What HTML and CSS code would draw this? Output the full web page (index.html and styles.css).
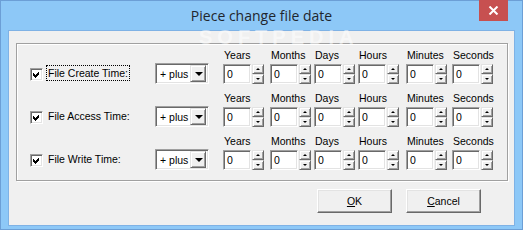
FILE: index.html
```html
<!DOCTYPE html>
<html>
<head>
<meta charset="utf-8">
<link rel="stylesheet" href="styles.css">
</head>
<body>
<div class="window">
  <div class="titlebar">
    <span class="title">Piece change file date</span>
    <div class="close">
      <svg width="11" height="9" viewBox="0 0 11 9"><path d="M1.5 0.5 L9.5 8.5 M9.5 0.5 L1.5 8.5" stroke="#fff" stroke-width="2" fill="none"/></svg>
    </div>
  </div>
  <div class="client">
    <div class="group">
      <div class="row">
        <span class="check"><svg width="13" height="13" viewBox="0 0 13 13"><path d="M3 5 L5 7 L9 3 L9 6 L5 10 L3 8 Z" fill="#000" shape-rendering="crispEdges"/></svg></span>
        <span class="label"><span class="focus">File Create Time:</span></span>
        <div class="combo"><span class="combo-text">+ plus</span><span class="drop"><span class="tri"></span></span></div>
        <div class="fcol c4"><div class="fh">Years</div><div class="field"><span class="edit">0</span><span class="spin"><span class="sb"><span class="up"></span></span><span class="sb"><span class="dn"></span></span></span></div></div>
        <div class="fcol c5"><div class="fh">Months</div><div class="field"><span class="edit">0</span><span class="spin"><span class="sb"><span class="up"></span></span><span class="sb"><span class="dn"></span></span></span></div></div>
        <div class="fcol c6"><div class="fh">Days</div><div class="field"><span class="edit">0</span><span class="spin"><span class="sb"><span class="up"></span></span><span class="sb"><span class="dn"></span></span></span></div></div>
        <div class="fcol c7"><div class="fh">Hours</div><div class="field"><span class="edit">0</span><span class="spin"><span class="sb"><span class="up"></span></span><span class="sb"><span class="dn"></span></span></span></div></div>
        <div class="fcol c8"><div class="fh">Minutes</div><div class="field"><span class="edit">0</span><span class="spin"><span class="sb"><span class="up"></span></span><span class="sb"><span class="dn"></span></span></span></div></div>
        <div class="fcol c9"><div class="fh">Seconds</div><div class="field"><span class="edit">0</span><span class="spin"><span class="sb"><span class="up"></span></span><span class="sb"><span class="dn"></span></span></span></div></div>
      </div>
      <div class="row">
        <span class="check"><svg width="13" height="13" viewBox="0 0 13 13"><path d="M3 5 L5 7 L9 3 L9 6 L5 10 L3 8 Z" fill="#000" shape-rendering="crispEdges"/></svg></span>
        <span class="label"><span class="plain">File Access Time:</span></span>
        <div class="combo"><span class="combo-text">+ plus</span><span class="drop"><span class="tri"></span></span></div>
        <div class="fcol c4"><div class="fh">Years</div><div class="field"><span class="edit">0</span><span class="spin"><span class="sb"><span class="up"></span></span><span class="sb"><span class="dn"></span></span></span></div></div>
        <div class="fcol c5"><div class="fh">Months</div><div class="field"><span class="edit">0</span><span class="spin"><span class="sb"><span class="up"></span></span><span class="sb"><span class="dn"></span></span></span></div></div>
        <div class="fcol c6"><div class="fh">Days</div><div class="field"><span class="edit">0</span><span class="spin"><span class="sb"><span class="up"></span></span><span class="sb"><span class="dn"></span></span></span></div></div>
        <div class="fcol c7"><div class="fh">Hours</div><div class="field"><span class="edit">0</span><span class="spin"><span class="sb"><span class="up"></span></span><span class="sb"><span class="dn"></span></span></span></div></div>
        <div class="fcol c8"><div class="fh">Minutes</div><div class="field"><span class="edit">0</span><span class="spin"><span class="sb"><span class="up"></span></span><span class="sb"><span class="dn"></span></span></span></div></div>
        <div class="fcol c9"><div class="fh">Seconds</div><div class="field"><span class="edit">0</span><span class="spin"><span class="sb"><span class="up"></span></span><span class="sb"><span class="dn"></span></span></span></div></div>
      </div>
      <div class="row">
        <span class="check"><svg width="13" height="13" viewBox="0 0 13 13"><path d="M3 5 L5 7 L9 3 L9 6 L5 10 L3 8 Z" fill="#000" shape-rendering="crispEdges"/></svg></span>
        <span class="label"><span class="plain">File Write Time:</span></span>
        <div class="combo"><span class="combo-text">+ plus</span><span class="drop"><span class="tri"></span></span></div>
        <div class="fcol c4"><div class="fh">Years</div><div class="field"><span class="edit">0</span><span class="spin"><span class="sb"><span class="up"></span></span><span class="sb"><span class="dn"></span></span></span></div></div>
        <div class="fcol c5"><div class="fh">Months</div><div class="field"><span class="edit">0</span><span class="spin"><span class="sb"><span class="up"></span></span><span class="sb"><span class="dn"></span></span></span></div></div>
        <div class="fcol c6"><div class="fh">Days</div><div class="field"><span class="edit">0</span><span class="spin"><span class="sb"><span class="up"></span></span><span class="sb"><span class="dn"></span></span></span></div></div>
        <div class="fcol c7"><div class="fh">Hours</div><div class="field"><span class="edit">0</span><span class="spin"><span class="sb"><span class="up"></span></span><span class="sb"><span class="dn"></span></span></span></div></div>
        <div class="fcol c8"><div class="fh">Minutes</div><div class="field"><span class="edit">0</span><span class="spin"><span class="sb"><span class="up"></span></span><span class="sb"><span class="dn"></span></span></span></div></div>
        <div class="fcol c9"><div class="fh">Seconds</div><div class="field"><span class="edit">0</span><span class="spin"><span class="sb"><span class="up"></span></span><span class="sb"><span class="dn"></span></span></span></div></div>
      </div>
    </div>
    <div class="buttons">
      <button class="btn"><u>O</u>K</button>
      <button class="btn"><u>C</u>ancel</button>
    </div>
  </div>
  <div class="watermark">SOFTPEDIA</div>
</div>
</body>
</html>
```
FILE: styles.css
```css
* { box-sizing: border-box; }
html, body { margin: 0; padding: 0; }
body { width: 523px; height: 230px; overflow: hidden; background: #8dc8f7; }

.window {
  position: relative;
  width: 523px;
  height: 230px;
  border: 1px solid #6c9fd6;
  background: #8dc8f7;
  padding: 0 7px 3px 7px;
  display: flex;
  flex-direction: column;
  font-family: "Liberation Sans", Arial, sans-serif;
  font-size: 10.5px;
  color: #000;
}

.titlebar {
  position: relative;
  height: 29px;
  flex: none;
  display: flex;
  align-items: center;
  justify-content: center;
}
.title {
  font-family: "Open Sans", "Noto Sans", sans-serif;
  font-size: 14px;
  line-height: 16px;
  color: #1f262e;
  margin-top: 1px;
}
.close {
  position: absolute;
  right: 7px;
  top: -1px;
  width: 29px;
  height: 21px;
  background: #c75050;
  display: flex;
  align-items: center;
  justify-content: center;
}

.client {
  flex: 1;
  background: #f0f0f0;
  border: 1px solid #7fb2e5;
  display: flex;
  flex-direction: column;
}

.group {
  margin: 12px 0 0 7px;
  width: 492px;
  height: 138px;
  border: 1px solid #a0a0a0;
  box-shadow: inset 1px 1px 0 #fff, 1px 1px 0 #fff;
  padding: 3px 0 0 13px;
  display: flex;
  flex-direction: column;
  gap: 6px;
}

.row {
  display: grid;
  grid-template-columns: 18px 107px 68px 47px 44px 44px 48px 46px 42px;
  grid-template-rows: 16px 21px;
  align-items: center;
}
.row > .check { grid-column: 1; grid-row: 2; }
.row > .label { grid-column: 2; grid-row: 2; }
.row > .combo { grid-column: 3; grid-row: 2; }
.fcol {
  grid-row: 1 / 3;
  align-self: stretch;
  display: grid;
  grid-template-rows: 16px 21px;
}
.c4 { grid-column: 4; }
.c5 { grid-column: 5; }
.c6 { grid-column: 6; }
.c7 { grid-column: 7; }
.c8 { grid-column: 8; }
.c9 { grid-column: 9; }
.fh { padding-left: 1px; line-height: 14px; margin-top: 1px; white-space: nowrap; }
.field { display: flex; align-items: center; }

.check {
  width: 13px;
  height: 13px;
  background: #fff;
  border: 1px solid;
  border-color: #a0a0a0 #fff #fff #a0a0a0;
  box-shadow: inset 1px 1px 0 #696969, inset -1px -1px 0 #e3e3e3;
  position: relative;
  margin-top: 1px;
}
.check svg { position: absolute; left: -1px; top: -1px; }

.label { line-height: 13px; margin-left: -1px; white-space: nowrap; }
.focus { outline: 1px dotted #000; outline-offset: 0; padding: 1px; }
.plain { padding: 1px; }

.combo {
  width: 54px;
  height: 21px;
  background: #fff;
  border: 1px solid;
  border-color: #a0a0a0 #fff #fff #a0a0a0;
  box-shadow: inset 1px 1px 0 #696969, inset -1px -1px 0 #e3e3e3;
  display: flex;
  align-items: center;
  padding: 2px;
}
.combo-text { flex: 1; padding-left: 2px; padding-top: 1px; white-space: nowrap; }
.drop {
  width: 16px;
  height: 17px;
  background: #f0f0f0;
  border: 1px solid;
  border-color: #e3e3e3 #696969 #696969 #e3e3e3;
  box-shadow: inset 1px 1px 0 #fff, inset -1px -1px 0 #a0a0a0;
  display: flex;
  align-items: center;
  justify-content: center;
}
.tri {
  width: 0; height: 0;
  border-left: 4px solid transparent;
  border-right: 4px solid transparent;
  border-top: 4px solid #000;
  margin-left: 1px;
}

.edit {
  width: 28px;
  height: 20px;
  background: #fff;
  border: 1px solid;
  border-color: #a0a0a0 #fff #fff #a0a0a0;
  box-shadow: inset 1px 1px 0 #696969, inset -1px -1px 0 #e3e3e3;
  padding: 3px 0 0 3px;
  line-height: 13px;
}
.spin {
  margin-left: 1px;
  width: 12px;
  height: 20px;
  display: flex;
  flex-direction: column;
}
.sb {
  flex: 1;
  background: #f0f0f0;
  border: 1px solid;
  border-color: #e3e3e3 #696969 #696969 #e3e3e3;
  box-shadow: inset 1px 1px 0 #fff, inset -1px -1px 0 #a0a0a0;
  display: flex;
  align-items: center;
  justify-content: center;
}
.up {
  width: 0; height: 0;
  border-left: 2px solid transparent;
  border-right: 2px solid transparent;
  border-bottom: 2px solid #000;
}
.dn {
  width: 0; height: 0;
  border-left: 2px solid transparent;
  border-right: 2px solid transparent;
  border-top: 2px solid #000;
}

.buttons {
  display: flex;
  justify-content: flex-end;
  gap: 14px;
  padding-right: 33px;
  margin-top: 8px;
}
.btn {
  width: 75px;
  height: 24px;
  font-family: "Liberation Sans", Arial, sans-serif;
  font-size: 10.5px;
  color: #000;
  background: #f0f0f0;
  border: 1px solid;
  border-color: #fff #696969 #696969 #fff;
  box-shadow: inset -1px -1px 0 #a0a0a0, inset 1px 1px 0 #e3e3e3;
  padding: 0;
}

.watermark {
  position: absolute;
  left: 198px;
  top: 25px;
  font-family: "Liberation Sans", Arial, sans-serif;
  font-weight: bold;
  font-size: 20px;
  line-height: 22px;
  letter-spacing: 5px;
  color: rgba(255, 255, 255, 0.5);
  pointer-events: none;
}
```
